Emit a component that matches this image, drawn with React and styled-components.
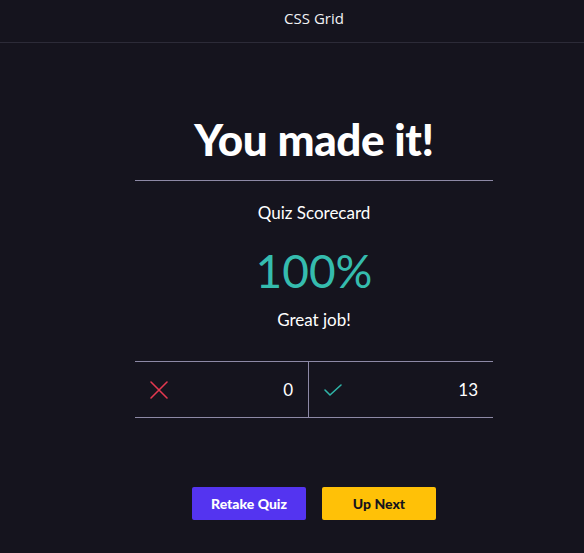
import React from 'react';
import styled, { createGlobalStyle } from 'styled-components';

const GlobalStyle = createGlobalStyle`
  html, body {
    margin: 0;
    padding: 0;
    background: #15141e;
  }
  body {
    font-family: Lato, "Open Sans", sans-serif;
    color: #ffffff;
  }
`;

const Page = styled.div`
  min-height: 553px;
  background: #15141e;
`;

const TopBar = styled.header`
  height: 43px;
  border-bottom: 1px solid #2c2b38;
  display: flex;
  align-items: center;
  justify-content: center;
  padding: 0 0 6px 44px;
  box-sizing: border-box;
  font-family: "Open Sans", sans-serif;
  font-size: 15px;
  color: #f2f2f5;
`;

const Main = styled.main`
  padding: 70px 0 0 44px;
  display: flex;
  justify-content: center;
`;

const Card = styled.section`
  width: 358px;
  display: flex;
  flex-direction: column;
  align-items: center;
`;

const Title = styled.h1`
  margin: 0;
  font-family: Lato, sans-serif;
  font-weight: 900;
  font-size: 44px;
  line-height: 52px;
  letter-spacing: -0.4px;
  color: #ffffff;
`;

const Rule = styled.hr`
  width: 100%;
  margin: 15px 0 0;
  border: 0;
  border-top: 1px solid #8d89a6;
`;

const Label = styled.p`
  margin: ${(p) => p.$top}px 0 0;
  font-size: 17px;
  line-height: 22px;
  color: #ffffff;
`;

const Percent = styled.div`
  margin-top: 22px;
  font-size: 46px;
  line-height: 50px;
  font-weight: 400;
  color: #35bcae;
`;

const Scores = styled.div`
  width: 100%;
  margin-top: 30px;
  display: grid;
  grid-template-columns: 173px 1fr;
  border-top: 1px solid #8d89a6;
  border-bottom: 1px solid #8d89a6;
`;

const ScoreCell = styled.div`
  height: 55px;
  display: flex;
  align-items: center;
  justify-content: space-between;
  padding: 0 15px 0 14px;
  border-left: ${(p) => (p.$divided ? '1px solid #8d89a6' : 'none')};
  font-size: 17px;
`;

const Buttons = styled.div`
  display: flex;
  gap: 16px;
  margin-top: 69px;
`;

const Button = styled.button`
  height: 33px;
  padding: 0 17px;
  min-width: 114px;
  border: 0;
  border-radius: 2px;
  font-family: Lato, sans-serif;
  font-weight: 900;
  font-size: 14px;
  cursor: pointer;
  background: ${(p) => (p.$primary ? '#5434f0' : '#ffc107')};
  color: ${(p) => (p.$primary ? '#ffffff' : '#15141e')};
`;

const CrossIcon = () => (
  <svg width="20" height="20" viewBox="0 0 20 20" fill="none">
    <path d="M2 2 L18 18 M18 2 L2 18" stroke="#e3384f" strokeWidth="1.6" strokeLinecap="round" />
  </svg>
);

const CheckIcon = () => (
  <svg width="20" height="20" viewBox="0 0 20 20" fill="none">
    <path d="M2 10 L7 15 L18 5" stroke="#2fb4a7" strokeWidth="1.6" strokeLinecap="round" strokeLinejoin="round" />
  </svg>
);

export default function App() {
  return (
    <Page>
      <GlobalStyle />
      <TopBar>CSS Grid</TopBar>
      <Main>
        <Card>
          <Title>You made it!</Title>
          <Rule />
          <Label $top={21}>Quiz Scorecard</Label>
          <Percent>100%</Percent>
          <Label $top={13}>Great job!</Label>
          <Scores>
            <ScoreCell>
              <CrossIcon />
              <span>0</span>
            </ScoreCell>
            <ScoreCell $divided>
              <CheckIcon />
              <span>13</span>
            </ScoreCell>
          </Scores>
          <Buttons>
            <Button $primary>Retake Quiz</Button>
            <Button>Up Next</Button>
          </Buttons>
        </Card>
      </Main>
    </Page>
  );
}
